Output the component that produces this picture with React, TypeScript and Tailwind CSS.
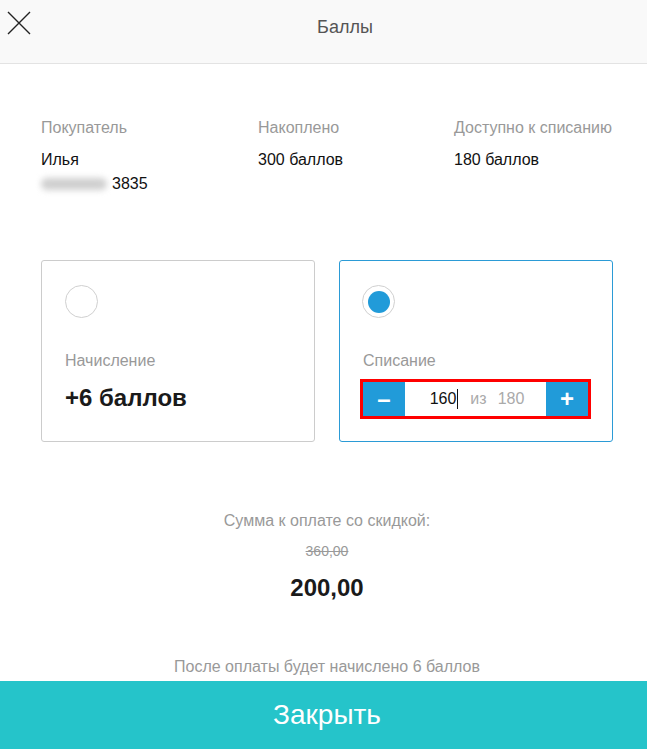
import React from "react";

const font = { fontFamily: '"Liberation Sans", Arial, sans-serif' };

function CloseIcon() {
	return (
		<svg width="24" height="24" viewBox="0 0 24 24" className="block">
			<path d="M1 1L23 23M23 1L1 23" stroke="#222" strokeWidth="1.4" fill="none" />
		</svg>
	);
}

function Radio({ checked }: { checked?: boolean }) {
	return (
		<span className="flex h-[33px] w-[33px] items-center justify-center rounded-full border border-[#d0d0d0] bg-white">
			{checked && <span className="h-[22px] w-[22px] rounded-full bg-[#219bd9]" />}
		</span>
	);
}

export default function App() {
	return (
		<div className="flex h-[749px] w-[647px] flex-col bg-white" style={font}>
			{/* Header */}
			<div className="flex h-[64px] shrink-0 items-start border-b border-[#e3e3e3] bg-[#f9f9f9]">
				<div className="w-[43px] pl-[7px] pt-[11px]">
					<CloseIcon />
				</div>
				<div className="flex-1 pt-[18px] text-center text-[18px] leading-[18px] text-[#555]">
					Баллы
				</div>
			</div>

			<div className="flex flex-1 flex-col pl-[41px] pr-[34px]">
				{/* Info */}
				<div className="mt-[55px] grid grid-cols-[217px_196px_1fr] text-[16px] leading-[18px]">
					<div>
						<div className="text-[#999]">Покупатель</div>
						<div className="mt-[14px] text-[#111]">Илья</div>
						<div className="mt-[6px] flex items-center text-[#111]">
							<span className="mr-[5px] inline-block h-[12px] w-[66px] rounded-full bg-[#cfcfcf] blur-[3px]" />
							3835
						</div>
					</div>
					<div>
						<div className="text-[#999]">Накоплено</div>
						<div className="mt-[14px] text-[#111]">300 баллов</div>
					</div>
					<div>
						<div className="text-[#999]">Доступно к списанию</div>
						<div className="mt-[14px] text-[#111]">180 баллов</div>
					</div>
				</div>

				{/* Options */}
				<div className="mt-[67px] grid grid-cols-2 gap-[24px]">
					<div className="h-[182px] rounded-[3px] border border-[#cccccc] px-[23px] pt-[24px]">
						<Radio />
						<div className="mt-[34px] text-[16px] leading-[18px] text-[#999]">Начисление</div>
						<div className="mt-[16px] text-[24px] font-bold leading-[24px] text-[#1a1a1a]">
							+6 баллов
						</div>
					</div>
					<div className="h-[182px] rounded-[3px] border border-[#2b9bd6] pl-[22px] pr-[24px] pt-[24px]">
						<Radio checked />
						<div className="mt-[34px] pl-[1px] text-[16px] leading-[18px] text-[#999]">Списание</div>
						<div className="ml-[1px] mt-[12px] flex h-[34px] outline-[3px] outline-[#ff0000] outline-solid">
							<button className="flex w-[42px] items-center justify-center bg-[#219bd9] text-[24px] font-bold leading-none text-white">
								–
							</button>
							<div className="flex flex-1 items-center justify-center pl-[3px] text-[16px] leading-[20px]">
								<span className="text-[#111]">160</span>
								<span className="ml-[1px] inline-block h-[20px] w-[1px] bg-[#111]" />
								<span className="ml-[12px] text-[#aaa]">из</span>
								<span className="ml-[11px] text-[#aaa]">180</span>
							</div>
							<button className="flex w-[42px] items-center justify-center bg-[#219bd9] text-[24px] font-bold leading-none text-white">
								+
							</button>
						</div>
					</div>
				</div>

				{/* Sum */}
				<div className="mt-[70px] text-center text-[16px] leading-[18px] text-[#999]">
					Сумма к оплате со скидкой:
				</div>
				<div className="mt-[13px] text-center text-[14px] leading-[16px] text-[#999] line-through">
					360,00
				</div>
				<div className="mt-[15px] text-center text-[24px] font-bold leading-[28px] text-[#1a1a1a]">
					200,00
				</div>

				<div className="mt-auto pb-[5px] text-center text-[16px] leading-[18px] text-[#999]">
					После оплаты будет начислено 6 баллов
				</div>
			</div>

			<button className="h-[68px] w-full shrink-0 bg-[#25c4ca] pl-[7px] text-[28px] leading-[30px] text-white">
				Закрыть
			</button>
		</div>
	);
}
